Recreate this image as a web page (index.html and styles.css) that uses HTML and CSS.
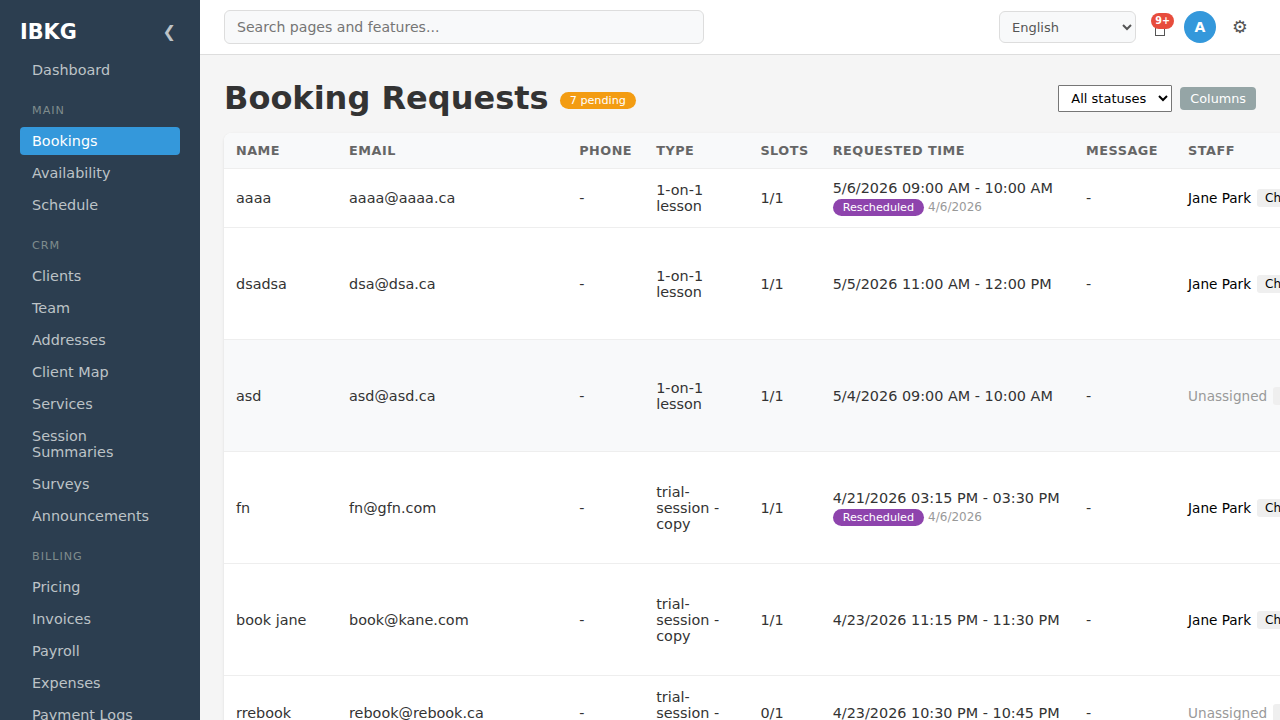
FILE: index.html
```
<!DOCTYPE html>
<html lang="en">
<head>
  <meta charset="UTF-8">
  <title>Booking Requests - IBKG</title>
  <link rel="stylesheet" href="styles.css">
</head>
<body>

<div class="app">
  <nav class="sidebar">
    <div class="sidebar-header">
      <h2>IBKG</h2>
      <button class="sidebar-toggle" aria-label="Collapse">❮</button>
    </div>
    <a href="#" class="nav-link">Dashboard</a>
    <div class="nav-section">Main</div>
    <a href="#" class="nav-link active">Bookings</a>
    <a href="#" class="nav-link">Availability</a>
    <a href="#" class="nav-link">Schedule</a>
    <div class="nav-section">CRM</div>
    <a href="#" class="nav-link">Clients</a>
    <a href="#" class="nav-link">Team</a>
    <a href="#" class="nav-link">Addresses</a>
    <a href="#" class="nav-link">Client Map</a>
    <a href="#" class="nav-link">Services</a>
    <a href="#" class="nav-link">Session Summaries</a>
    <a href="#" class="nav-link">Surveys</a>
    <a href="#" class="nav-link">Announcements</a>
    <div class="nav-section">Billing</div>
    <a href="#" class="nav-link">Pricing</a>
    <a href="#" class="nav-link">Invoices</a>
    <a href="#" class="nav-link">Payroll</a>
    <a href="#" class="nav-link">Expenses</a>
    <a href="#" class="nav-link">Payment Logs</a>
  </nav>

  <div class="main">
    <header class="topbar">
      <input type="text" class="search" placeholder="Search pages and features...">
      <div class="topbar-actions">
        <select class="language">
          <option>English</option>
          <option>Français</option>
        </select>
        <button class="bell" aria-label="Notifications">
          <svg width="10" height="16" viewBox="0 0 10 16"><rect x="0.5" y="0.5" width="9" height="14" fill="none" stroke="currentColor"/></svg>
          <span class="bell-count">9+</span>
        </button>
        <div class="avatar">A</div>
        <button class="settings" aria-label="Settings">⚙</button>
      </div>
    </header>

    <main class="content">
      <div class="page-header">
        <h1>Booking Requests <span class="badge badge-pending">7 pending</span></h1>
        <div class="page-actions">
          <select class="status-filter">
            <option>All statuses</option>
            <option>Pending</option>
          </select>
          <button class="btn-columns">Columns</button>
        </div>
      </div>

      <table class="bookings">
        <colgroup>
          <col class="col-name">
          <col class="col-email">
          <col class="col-phone">
          <col class="col-type">
          <col class="col-slots">
          <col class="col-time">
          <col class="col-message">
          <col class="col-staff">
        </colgroup>
        <thead>
          <tr>
            <th>Name</th>
            <th>Email</th>
            <th>Phone</th>
            <th>Type</th>
            <th>Slots</th>
            <th>Requested Time</th>
            <th>Message</th>
            <th>Staff</th>
          </tr>
        </thead>
        <tbody>
          <tr class="compact">
            <td>aaaa</td>
            <td>aaaa@aaaa.ca</td>
            <td>-</td>
            <td>1-on-1 lesson</td>
            <td>1/1</td>
            <td>5/6/2026 09:00 AM - 10:00 AM
              <div class="moved"><span class="badge badge-rescheduled">Rescheduled</span> <small>4/6/2026</small></div>
            </td>
            <td>-</td>
            <td><div class="staff"><span>Jane Park</span><button>Change</button></div></td>
          </tr>
          <tr>
            <td>dsadsa</td>
            <td>dsa@dsa.ca</td>
            <td>-</td>
            <td>1-on-1 lesson</td>
            <td>1/1</td>
            <td>5/5/2026 11:00 AM - 12:00 PM</td>
            <td>-</td>
            <td><div class="staff"><span>Jane Park</span><button>Change</button></div></td>
          </tr>
          <tr class="highlight">
            <td>asd</td>
            <td>asd@asd.ca</td>
            <td>-</td>
            <td>1-on-1 lesson</td>
            <td>1/1</td>
            <td>5/4/2026 09:00 AM - 10:00 AM</td>
            <td>-</td>
            <td><div class="staff"><span class="unassigned">Unassigned</span><button>Assign</button></div></td>
          </tr>
          <tr>
            <td>fn</td>
            <td>fn@gfn.com</td>
            <td>-</td>
            <td>trial-session - copy</td>
            <td>1/1</td>
            <td>4/21/2026 03:15 PM - 03:30 PM
              <div class="moved"><span class="badge badge-rescheduled">Rescheduled</span> <small>4/6/2026</small></div>
            </td>
            <td>-</td>
            <td><div class="staff"><span>Jane Park</span><button>Change</button></div></td>
          </tr>
          <tr>
            <td>book jane</td>
            <td>book@kane.com</td>
            <td>-</td>
            <td>trial-session - copy</td>
            <td>1/1</td>
            <td>4/23/2026 11:15 PM - 11:30 PM</td>
            <td>-</td>
            <td><div class="staff"><span>Jane Park</span><button>Change</button></div></td>
          </tr>
          <tr class="short">
            <td>rrebook</td>
            <td>rebook@rebook.ca</td>
            <td>-</td>
            <td>trial-session - copy</td>
            <td>0/1</td>
            <td>4/23/2026 10:30 PM - 10:45 PM</td>
            <td>-</td>
            <td><div class="staff"><span class="unassigned">Unassigned</span><button>Assign</button></div></td>
          </tr>
        </tbody>
      </table>
    </main>
  </div>
</div>

</body>
</html>
```
FILE: styles.css
```
* {
  box-sizing: border-box;
}

body {
  font-family: "DejaVu Sans", sans-serif;
  background: #f5f5f5;
  color: #333;
  margin: 0;
  overflow: hidden;
}

button, input, select {
  font-family: inherit;
}

button {
  border: none;
  cursor: pointer;
}

.app {
  display: flex;
  height: 100vh;
  overflow: hidden;
}

/* Sidebar */
.sidebar {
  width: 200px;
  flex-shrink: 0;
  padding: 19px 20px;
  background: #2c3e50;
  overflow: hidden;
}

.sidebar-header {
  display: flex;
  justify-content: space-between;
  align-items: center;
  height: 25px;
  margin-bottom: 12px;
}

.sidebar-header h2 {
  margin: 0;
  font-size: 20.8px;
  color: #fff;
}

.sidebar-toggle {
  padding: 0 4px;
  background: none;
  color: #bdc3c7;
  font-size: 16px;
}

.nav-link {
  display: block;
  padding: 6px 12px;
  margin-bottom: 4px;
  border-radius: 4px;
  color: #bdc3c7;
  font-size: 14.4px;
  text-decoration: none;
}

.nav-link.active {
  background: #3498db;
  color: #fff;
}

.nav-section {
  padding: 16px 12px 6px;
  margin-bottom: 4px;
  color: #7f8c8d;
  font-size: 11.2px;
  letter-spacing: 1px;
  text-transform: uppercase;
}

/* Top bar */
.main {
  flex: 1;
  min-width: 0;
}

.topbar {
  display: flex;
  justify-content: space-between;
  align-items: center;
  height: 55px;
  padding: 0 24px;
  background: #fff;
  border-bottom: 1px solid #ddd;
}

.search {
  width: 480px;
  height: 34px;
  padding: 0 12px;
  border: 1px solid #ddd;
  border-radius: 6px;
  background: #f8f9fa;
  font-size: 14.08px;
}

.topbar-actions {
  display: flex;
  align-items: center;
  gap: 8px;
}

.language {
  width: 137px;
  height: 32px;
  padding: 0 8px;
  border: 1px solid #ddd;
  border-radius: 6px;
  background: #f8f9fa;
  color: #555;
  font-size: 13px;
}

.bell, .settings {
  width: 32px;
  height: 32px;
  padding: 0;
  background: none;
  color: #555;
  font-size: 17.6px;
}

.bell {
  position: relative;
  display: flex;
  align-items: center;
  justify-content: center;
  padding-top: 4px;
}

.bell-count {
  position: absolute;
  top: 2px;
  right: 2px;
  height: 16px;
  padding: 0 4px;
  border-radius: 8px;
  background: #e74c3c;
  color: #fff;
  font-size: 9.6px;
  font-weight: bold;
  line-height: 16px;
}

.avatar {
  display: flex;
  align-items: center;
  justify-content: center;
  width: 32px;
  height: 32px;
  border-radius: 50%;
  background: #3498db;
  color: #fff;
  font-size: 14px;
  font-weight: bold;
}

/* Page */
.content {
  padding: 24px;
}

.page-header {
  display: flex;
  justify-content: space-between;
  align-items: center;
  height: 38px;
  margin-bottom: 16px;
}

.page-header h1 {
  margin: 0;
  font-size: 32px;
}

.page-actions {
  display: flex;
  align-items: center;
  gap: 8px;
}

.status-filter {
  width: 114px;
  height: 27px;
  padding: 0 8px;
  border: 1px solid #767676;
  border-radius: 1px;
  background: #fff;
  font-size: 13px;
}

.btn-columns {
  padding: 4px 10px;
  border-radius: 4px;
  background: #95a5a6;
  color: #fff;
  font-size: 12.8px;
}

.badge {
  display: inline-block;
  padding: 2px 10px;
  border-radius: 12px;
  color: #fff;
  font-size: 11.2px;
  font-weight: normal;
}

.badge-pending {
  background: #f39c12;
  vertical-align: middle;
}

.badge-rescheduled {
  background: #8e44ad;
}

/* Bookings table */
.bookings {
  width: 1300px;
  table-layout: fixed;
  border-collapse: separate;
  border-spacing: 0;
  background: #fff;
  border-radius: 8px;
  box-shadow: 0 1px 3px rgba(0, 0, 0, 0.1);
  overflow: hidden;
}

.col-name { width: 113px; }
.col-email { width: 230.2px; }
.col-phone { width: 77px; }
.col-type { width: 104.2px; }
.col-slots { width: 72.3px; }
.col-time { width: 253.4px; }
.col-message { width: 102px; }

.bookings th, .bookings td {
  padding: 10px 12px;
  border-bottom: 1px solid #eee;
  text-align: left;
  vertical-align: middle;
}

.bookings th {
  height: 36px;
  background: #f8f9fa;
  color: #666;
  font-size: 12.8px;
  letter-spacing: 0.5px;
  text-transform: uppercase;
}

.bookings td {
  height: 112px;
  font-size: 14.4px;
}

.bookings .compact td {
  height: 59px;
}

.bookings .short td {
  height: 75px;
}

.bookings .highlight td {
  background: #f8f9fa;
}

.moved {
  display: flex;
  align-items: flex-start;
  gap: 4px;
  margin-top: 3px;
}

.moved small {
  padding-top: 1px;
  color: #999;
  font-size: 12px;
}

.staff {
  display: flex;
  align-items: center;
  gap: 6px;
  color: #000;
  font-size: 13.6px;
}

.staff button {
  padding: 2px 8px;
  border-radius: 3px;
  background: #efefef;
  font-size: 12px;
}

.staff .unassigned {
  color: #999;
}
```
